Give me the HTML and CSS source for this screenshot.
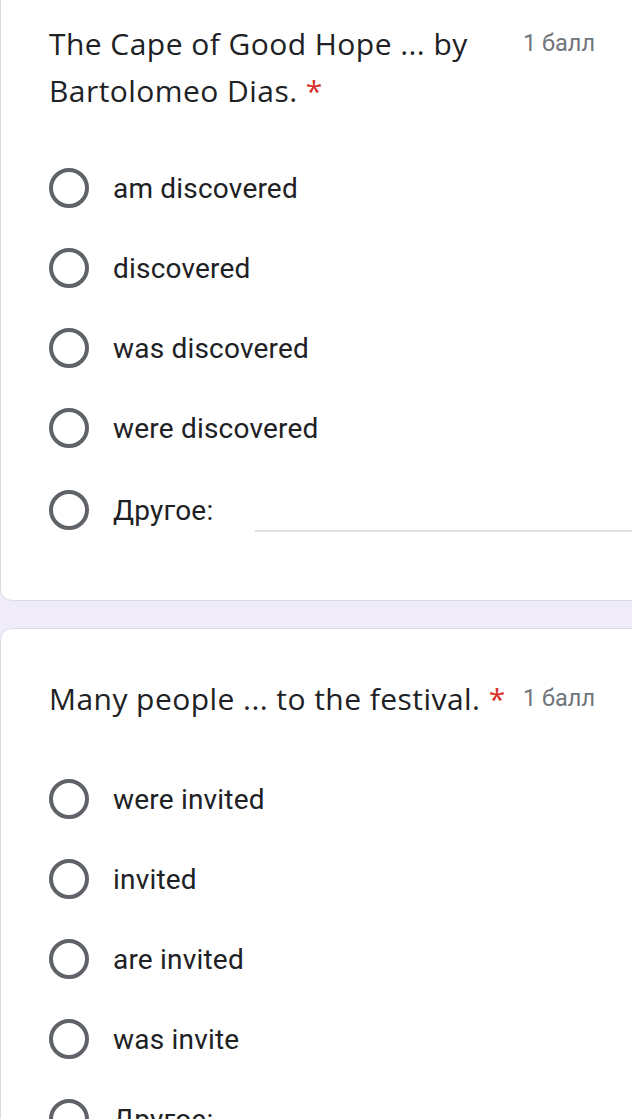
FILE: index.html
```html
<!DOCTYPE html>
<html lang="ru">
<head>
<meta charset="utf-8">
<link rel="stylesheet" href="styles.css">
</head>
<body>
<div class="form">
  <div class="card">
    <div class="q-head">
      <div class="q-title">The Cape of Good Hope ... by Bartolomeo Dias. <span class="req">*</span></div>
      <div class="q-points">1 балл</div>
    </div>
    <div class="options">
      <div class="opt"><span class="radio"></span><span class="label">am discovered</span></div>
      <div class="opt"><span class="radio"></span><span class="label">discovered</span></div>
      <div class="opt"><span class="radio"></span><span class="label">was discovered</span></div>
      <div class="opt"><span class="radio"></span><span class="label">were discovered</span></div>
      <div class="opt opt-other"><span class="radio"></span><span class="label">Другое:</span><span class="other-input"></span></div>
    </div>
  </div>
  <div class="card card-single">
    <div class="q-head">
      <div class="q-title">Many people ... to the festival. <span class="req">*</span></div>
      <div class="q-points">1 балл</div>
    </div>
    <div class="options">
      <div class="opt"><span class="radio"></span><span class="label">were invited</span></div>
      <div class="opt"><span class="radio"></span><span class="label">invited</span></div>
      <div class="opt"><span class="radio"></span><span class="label">are invited</span></div>
      <div class="opt"><span class="radio"></span><span class="label">was invite</span></div>
      <div class="opt opt-other"><span class="radio"></span><span class="label">Другое:</span><span class="other-input"></span></div>
    </div>
  </div>
</div>
</body>
</html>
```
FILE: styles.css
```css
html, body {
  margin: 0;
  padding: 0;
}
body {
  background: #f0ebf8;
  overflow: hidden;
  font-family: Roboto, "Liberation Sans", Arial, sans-serif;
  color: #202124;
}
.form {
  margin-top: -27px;
  display: flex;
  flex-direction: column;
  gap: 27px;
}
.card {
  background: #fff;
  border: 1px solid #dadce0;
  border-radius: 12px;
  width: calc(100% + 12px);
  box-sizing: border-box;
  padding: 46px 48px 48px 48px;
}
.q-head {
  display: flex;
  align-items: flex-start;
  gap: 16px;
}
.q-title {
  flex: 1;
  font-family: "Open Sans", Roboto, sans-serif;
  font-size: 30px;
  line-height: 47px;
  letter-spacing: 0.45px;
  color: #202124;
}
.req {
  color: #d93025;
}
.q-points {
  font-size: 23.5px;
  line-height: 47px;
  color: #70757a;
  white-space: nowrap;
}
.options {
  margin-top: 34px;
  display: flex;
  flex-direction: column;
}
.card-single .options {
  margin-top: 37px;
}
.opt {
  display: flex;
  align-items: center;
  height: 80px;
}
.opt-other {
  height: 84px;
}
.card-single .opt-other {
  height: 80px;
}
.radio {
  width: 40px;
  height: 40px;
  box-sizing: border-box;
  border: 4px solid #5f6368;
  border-radius: 50%;
  flex: none;
}
.label {
  margin-left: 24px;
  font-size: 28px;
  letter-spacing: 0.2px;
  color: #202124;
}
.other-input {
  flex: 1;
  align-self: flex-end;
  margin: 0 -48px 20px 42px;
  height: 2px;
  background: #e0e0e0;
}
```
